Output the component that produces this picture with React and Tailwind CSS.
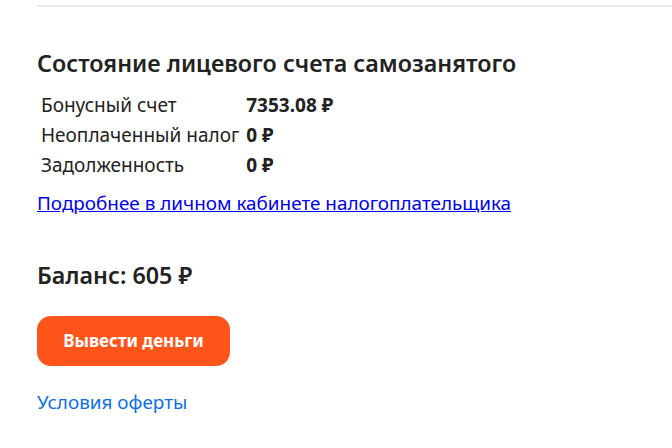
export default function App() {
  const rows = [
    ["Бонусный счет", "7353.08 ₽"],
    ["Неоплаченный налог", "0 ₽"],
    ["Задолженность", "0 ₽"],
  ];
  return (
    <div className="w-[672px] h-[448px] bg-white overflow-hidden pl-[37px] pt-[5px] text-[#222222]" style={{ fontFamily: '"Noto Sans", "Open Sans", sans-serif' }}>
      <div className="h-[2px] bg-[#ebebeb]" />
      <h2 className="mt-[41px] text-[23.3px] leading-[30px] font-semibold text-[#222222]">Состояние лицевого счета самозанятого</h2>
      <table className="mt-[12px] text-[19px] leading-[22px] border-separate border-spacing-0">
        <tbody>
          {rows.map(([l, v]) => (
            <tr key={l}>
              <td className="pl-[4px] pr-[7px] py-[4px]">{l}</td>
              <td className="py-[4px] font-bold">{v}</td>
            </tr>
          ))}
        </tbody>
      </table>
      <a href="#" className="block mt-[11px] text-[18.9px] leading-[24px] text-[#0000ee] underline w-fit">Подробнее в личном кабинете налогоплательщика</a>
      <div className="mt-[45px] text-[23.3px] leading-[30px] font-semibold">Баланс: 605 ₽</div>
      <button className="mt-[26px] block w-[193px] h-[50px] rounded-[14px] bg-[#ff541a] text-white text-[17px] font-bold">Вывести деньги</button>
      <a href="#" className="block mt-[24px] text-[18.9px] leading-[24px] text-[#0d6fe6] w-fit">Условия оферты</a>
    </div>
  );
}
